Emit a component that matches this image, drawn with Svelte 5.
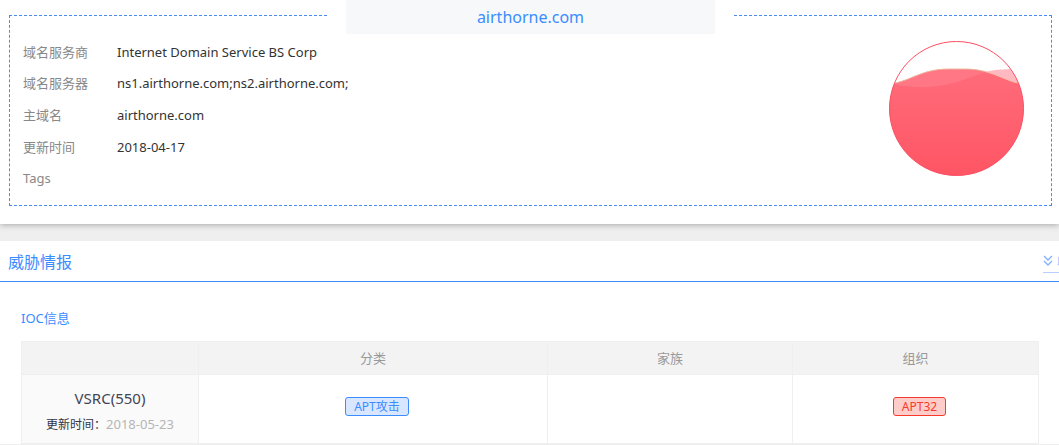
<script>
  const details = [
    { label: '域名服务商', value: 'Internet Domain Service BS Corp' },
    { label: '域名服务器', value: 'ns1.airthorne.com;ns2.airthorne.com;' },
    { label: '主域名', value: 'airthorne.com' },
    { label: '更新时间', value: '2018-04-17' },
    { label: 'Tags', value: '' },
  ];
  const rows = [
    {
      source: 'VSRC(550)',
      updated: '2018-05-23',
      category: 'APT攻击',
      family: '',
      group: 'APT32',
    },
  ];
</script>

<main>
  <section class="summary">
    <div class="frame">
      <h1>airthorne.com</h1>
      <div class="body">
        <dl>
          {#each details as item}
            <div class="detail">
              <dt>{item.label}</dt>
              <dd>{item.value}</dd>
            </div>
          {/each}
        </dl>
        <svg class="gauge" viewBox="0 0 135 135" aria-hidden="true">
          <defs>
            <linearGradient id="water" x1="0" y1="0" x2="0" y2="1">
              <stop offset="0" stop-color="#ff6c7b" />
              <stop offset="1" stop-color="#ff5564" />
            </linearGradient>
            <clipPath id="bowl"><circle cx="67.5" cy="67.5" r="67" /></clipPath>
          </defs>
          <g clip-path="url(#bowl)">
            <path d="M0 43C21 41 31 28 60 28H76C104 28 116 41 135 43V135H0Z" fill="url(#water)" />
            <path
              d="M0 43C21 41 31 28 60 28H76C84 28 91 29 97 31C78 36 65 46 33 46C19 46 10 44 0 43Z"
              fill="#ff7784"
            />
            <path d="M97 31C104 29 110 28 135 28V43C120 42 110 34 97 31Z" fill="#ffbac1" />
            <path
              d="M0 43C21 41 31 28 60 28H76C104 28 116 41 135 43"
              fill="none"
              stroke="#eeb9a0"
              stroke-width="1"
            />
          </g>
          <circle cx="67.5" cy="67.5" r="67" fill="none" stroke="#fb4e62" />
        </svg>
      </div>
    </div>
  </section>

  <section class="intel">
    <header>
      <h2>威胁情报</h2>
      <a href="#more">
        <svg viewBox="0 0 10 12" aria-hidden="true">
          <path d="M1 1L5 5L9 1M1 6L5 10L9 6" />
        </svg>
        <span>收起</span>
      </a>
    </header>
    <div class="content">
      <h3>IOC信息</h3>
      <table>
        <thead>
          <tr>
            <th class="source"></th>
            <th class="category">分类</th>
            <th class="family">家族</th>
            <th>组织</th>
          </tr>
        </thead>
        <tbody>
          {#each rows as row}
            <tr>
              <td class="source">
                <strong>{row.source}</strong>
                <p>更新时间：<time>{row.updated}</time></p>
              </td>
              <td><span class="tag">{row.category}</span></td>
              <td>{row.family}</td>
              <td><span class="tag danger">{row.group}</span></td>
            </tr>
          {/each}
        </tbody>
      </table>
    </div>
  </section>
</main>

<style>
  :global(body) {
    background: #efefef;
  }
  main {
    overflow: hidden;
    font-family: 'Noto Sans', 'Noto Sans CJK SC', sans-serif;
    font-size: 13px;
    color: #333;
  }
  h1,
  h2,
  h3,
  dl,
  dd,
  p {
    margin: 0;
    font-weight: normal;
  }
  .summary {
    padding: 15px 7px 18px 9px;
    background: #fff;
    box-shadow: 0 1px 6px rgba(0, 0, 0, 0.3);
  }
  .frame {
    border: 1px dashed #4a8af4;
  }
  h1 {
    width: 39%;
    height: 34px;
    margin: -16px auto 0;
    box-sizing: border-box;
    border: solid #fff;
    border-width: 0 18px;
    background: #f7f8fa;
    color: #3b8cff;
    font-size: 16px;
    line-height: 34px;
    text-align: center;
  }
  .body {
    display: flex;
    justify-content: space-between;
    padding: 2px 27px 11px 13px;
  }
  dl {
    display: grid;
    grid-auto-rows: 1fr;
  }
  .detail {
    display: flex;
    align-items: center;
    line-height: 20px;
  }
  dt {
    width: 94px;
    color: #888;
  }
  .gauge {
    width: 135px;
    height: 135px;
    margin: 5px 0 18px;
  }
  .intel {
    margin-top: 17px;
    background: #fff;
  }
  header {
    display: flex;
    justify-content: space-between;
    align-items: center;
    height: 40px;
    padding-left: 8px;
    border-bottom: 1px solid #3b8cff;
  }
  h2 {
    color: #3b8cff;
    font-size: 16px;
  }
  header a {
    display: flex;
    align-items: center;
    gap: 4px;
    height: 22px;
    margin-right: -24px;
    border-bottom: 1px solid #b8d0ff;
    color: #8db8ff;
    text-decoration: none;
  }
  header svg {
    width: 10px;
    height: 12px;
    fill: none;
    stroke: #84b0ff;
    stroke-width: 1.4;
  }
  .content {
    padding: 26px 20px 0 21px;
  }
  h3 {
    margin-bottom: 13px;
    color: #3b8cff;
    font-size: 13px;
    line-height: 20px;
  }
  table {
    width: 100%;
    border-collapse: collapse;
    table-layout: fixed;
    text-align: center;
  }
  th,
  td {
    padding: 0;
    border: 1px solid #efefef;
  }
  th {
    height: 32px;
    background: #f3f3f3;
    color: #999;
    font-weight: normal;
    line-height: 18px;
  }
  td {
    height: 62px;
    padding-bottom: 6px;
  }
  th.source {
    width: 176px;
  }
  th.category {
    width: 348px;
  }
  th.family {
    width: 244px;
  }
  td.source {
    padding: 6px 0 0;
    background: #fafafa;
  }
  strong {
    display: block;
    color: #445;
    font-size: 15px;
    font-weight: normal;
    line-height: 24px;
  }
  p {
    color: #334;
    font-size: 12px;
    line-height: 28px;
  }
  time {
    color: #b5b5b5;
    font-size: 13px;
  }
  .tag {
    display: inline-block;
    margin-left: 8px;
    padding: 0 8px;
    border: 1px solid #3b8cff;
    border-radius: 3px;
    background: #d8e7ff;
    color: #3b8cff;
    font-size: 12px;
    line-height: 17px;
    vertical-align: middle;
  }
  .danger {
    border-color: #f43b2c;
    background: #ffcdc9;
    color: #f43b2c;
  }
</style>
